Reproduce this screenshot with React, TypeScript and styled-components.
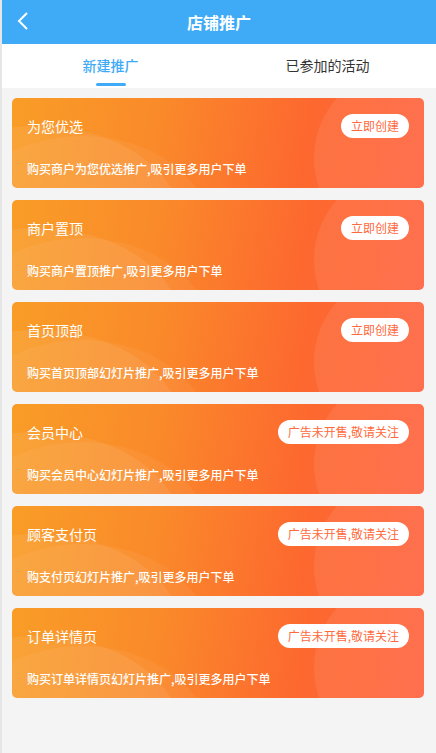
import styled, { createGlobalStyle } from 'styled-components';

const GlobalStyle = createGlobalStyle`
  html, body {
    margin: 0;
    padding: 0;
    background: #f4f4f4;
    font-family: "Noto Sans CJK SC", "Noto Sans", sans-serif;
  }
`;

const Page = styled.div`
  min-height: 753px;
  background: #f4f4f4;
  border-left: 2px solid #e6e6e6;
  box-sizing: border-box;
`;

const Header = styled.header`
  height: 44px;
  background: #3fabf7;
  display: flex;
  align-items: center;
  justify-content: center;
  position: relative;
  color: #fff;
`;

const BackButton = styled.button`
  position: absolute;
  left: 8px;
  top: 8px;
  width: 26px;
  height: 26px;
  padding: 0;
  border: none;
  background: none;
  display: flex;
  align-items: center;
  justify-content: center;
`;

const Title = styled.h1`
  margin: 0;
  font-size: 16px;
  font-weight: 700;
`;

const Tabs = styled.nav`
  height: 44px;
  background: #fff;
  display: grid;
  grid-template-columns: 1fr 1fr;
`;

const Tab = styled.div<{ active?: boolean }>`
  position: relative;
  display: flex;
  align-items: center;
  justify-content: center;
  font-size: 14px;
  font-weight: ${p => (p.active ? 500 : 400)};
  color: ${p => (p.active ? '#3fabf7' : '#333')};
  padding-bottom: 2px;

  &::after {
    content: '';
    display: ${p => (p.active ? 'block' : 'none')};
    position: absolute;
    bottom: 2px;
    left: 50%;
    width: 30px;
    height: 3px;
    margin-left: -15px;
    border-radius: 2px;
    background: #3fabf7;
  }
`;

const List = styled.div`
  padding: 10px 12px 10px 10px;
  display: flex;
  flex-direction: column;
  gap: 12px;
`;

const Card = styled.div`
  position: relative;
  overflow: hidden;
  height: 90px;
  border-radius: 5px;
  background: linear-gradient(100deg, #f99d27 0%, #fa8a2a 35%, #fd682f 70%, #ff6340 100%);
  padding: 0 15px;
  display: flex;
  flex-direction: column;
  justify-content: space-between;
  box-sizing: border-box;
  color: #fff;

  &::before {
    content: '';
    position: absolute;
    left: -120px;
    top: 28px;
    width: 290px;
    height: 200px;
    border-radius: 50%;
    background: rgba(255, 255, 255, 0.07);
  }

  &::after {
    content: '';
    position: absolute;
    right: -70px;
    top: -30px;
    width: 180px;
    height: 180px;
    border-radius: 50%;
    background: rgba(255, 255, 255, 0.08);
  }
`;

const CardGlow = styled.span`
  position: absolute;
  left: -60px;
  top: 38px;
  width: 260px;
  height: 200px;
  border-radius: 50%;
  background: rgba(255, 255, 255, 0.05);
`;

const CardTop = styled.div`
  position: relative;
  z-index: 1;
  display: flex;
  align-items: center;
  justify-content: space-between;
  padding-top: 16px;
`;

const CardName = styled.span`
  font-size: 14px;
`;

const ActionPill = styled.span`
  background: #fff;
  color: #ff6a3d;
  font-size: 12px;
  line-height: 24px;
  height: 24px;
  padding: 0 10px;
  border-radius: 12px;
`;

const CardDesc = styled.div`
  position: relative;
  z-index: 1;
  font-size: 12px;
  font-weight: 500;
  padding-bottom: 11px;
`;

const items = [
  { name: '为您优选', desc: '购买商户为您优选推广,吸引更多用户下单', open: true },
  { name: '商户置顶', desc: '购买商户置顶推广,吸引更多用户下单', open: true },
  { name: '首页顶部', desc: '购买首页顶部幻灯片推广,吸引更多用户下单', open: true },
  { name: '会员中心', desc: '购买会员中心幻灯片推广,吸引更多用户下单', open: false },
  { name: '顾客支付页', desc: '购支付页幻灯片推广,吸引更多用户下单', open: false },
  { name: '订单详情页', desc: '购买订单详情页幻灯片推广,吸引更多用户下单', open: false },
];

export default function App() {
  return (
    <>
      <GlobalStyle />
      <Page>
        <Header>
          <BackButton aria-label="返回">
            <svg width="14" height="20" viewBox="0 0 14 20">
              <path d="M11 2 L3 10 L11 18" fill="none" stroke="#fff" strokeWidth="2" />
            </svg>
          </BackButton>
          <Title>店铺推广</Title>
        </Header>
        <Tabs>
          <Tab active>新建推广</Tab>
          <Tab>已参加的活动</Tab>
        </Tabs>
        <List>
          {items.map(item => (
            <Card key={item.name}>
              <CardGlow />
              <CardTop>
                <CardName>{item.name}</CardName>
                <ActionPill>{item.open ? '立即创建' : '广告未开售,敬请关注'}</ActionPill>
              </CardTop>
              <CardDesc>{item.desc}</CardDesc>
            </Card>
          ))}
        </List>
      </Page>
    </>
  );
}
